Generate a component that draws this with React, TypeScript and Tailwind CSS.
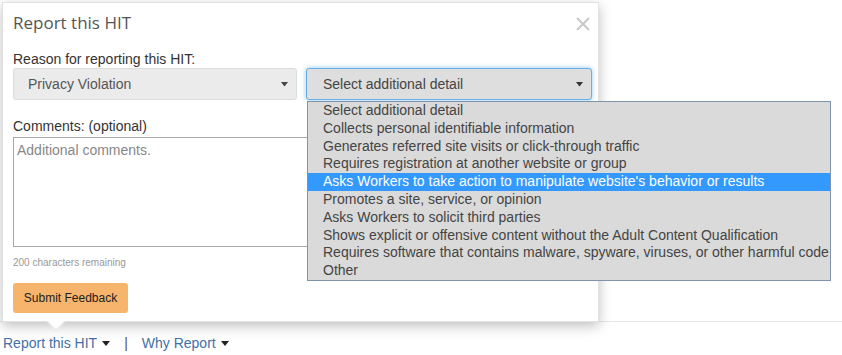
import React from "react";

const details = [
  "Select additional detail",
  "Collects personal identifiable information",
  "Generates referred site visits or click-through traffic",
  "Requires registration at another website or group",
  "Asks Workers to take action to manipulate website's behavior or results",
  "Promotes a site, service, or opinion",
  "Asks Workers to solicit third parties",
  "Shows explicit or offensive content without the Adult Content Qualification",
  "Requires software that contains malware, spyware, viruses, or other harmful code",
  "Other",
];

const Caret = ({ w = 8 }: { w?: number }) => (
  <svg width={w} height={w * 0.75} viewBox="0 0 8 6" className="inline-block">
    <path d="M0 0 L8 0 L4 5 Z" fill="currentColor" />
  </svg>
);

const App: React.FC = () => {
  return (
    <div
      className="relative w-[842px] h-[355px] bg-white overflow-hidden flex flex-col"
      style={{ fontFamily: '"Liberation Sans", Arial, sans-serif' }}
    >
      <div className="h-[322px] border-b border-[#e6e6e6] shrink-0" />

      {/* links under the popover */}
      <div className="flex items-center pl-[3px] pt-[10px] h-[33px] text-[14px] text-[#4470a6]">
        <span>Report this HIT</span>
        <span className="ml-[5px] mr-[14px] text-[#222]">
          <Caret />
        </span>
        <span className="text-[#555]">|</span>
        <span className="ml-[14px]">Why Report</span>
        <span className="ml-[5px] text-[#222]">
          <Caret />
        </span>
      </div>

      {/* report popover */}
      <div className="absolute left-[2px] top-[2px] w-[597px] h-[320px] bg-white border border-[#e2e2e2] shadow-[0_4px_12px_rgba(0,0,0,0.25)] pl-[10px] pr-[6px]">
        <div className="flex items-center justify-between h-[39px] pt-[1px]">
          <span
            className="text-[17px] text-[#555]"
            style={{ fontFamily: '"Open Sans", sans-serif' }}
          >
            Report this HIT
          </span>
          <svg width="14" height="14" viewBox="0 0 14 14" className="mr-[2px] mt-[1px]">
            <path d="M1 1 L13 13 M13 1 L1 13" stroke="#c8c8c8" strokeWidth="2" />
          </svg>
        </div>
        <div className="text-[14px] text-[#333] leading-[16px] h-[27px] pt-[9px]">
          Reason for reporting this HIT:
        </div>
        <div className="flex gap-[9px] mt-[-1px]">
          <div className="w-[284px] shrink-0 h-[32px] bg-[#ebebeb] border border-[#dcdcdc] rounded-[3px] flex items-center justify-between pl-[14px] pr-[8px] text-[14px] text-[#555]">
            <span>Privacy Violation</span>
            <span className="text-[#444]">
              <Caret w={7} />
            </span>
          </div>
          <div className="w-[286px] shrink-0 h-[32px] bg-[#dedede] border border-[#66afe9] shadow-[0_0_5px_rgba(102,175,233,0.7)] rounded-[3px] flex items-center justify-between pl-[16px] pr-[8px] text-[14px] text-[#444]">
            <span>Select additional detail</span>
            <span className="text-[#333]">
              <Caret w={7} />
            </span>
          </div>
        </div>
        <div className="text-[14px] text-[#333] leading-[16px] pt-[18px]">
          Comments: (optional)
        </div>
        <div className="mt-[3px] w-[300px] h-[110px] border border-[#a9a9a9] px-[3px] pt-[2px] text-[14px] text-[#888]">
          Additional comments.
        </div>
        <div className="text-[10px] text-[#999] mt-[10px] leading-[12px]">
          200 characters remaining
        </div>
        <button className="mt-[14px] w-[115px] h-[30px] bg-[#f6b46c] rounded-[3px] text-[12px] text-[#222]">
          Submit Feedback
        </button>
      </div>

      {/* pointer */}
      <div className="absolute left-[46px] top-[321px] w-0 h-0 border-l-[10px] border-r-[10px] border-t-[10px] border-l-transparent border-r-transparent border-t-[#ececec]" />
      <div className="absolute left-[47px] top-[320px] w-0 h-0 border-l-[9px] border-r-[9px] border-t-[9px] border-l-transparent border-r-transparent border-t-white" />

      {/* open dropdown list */}
      <div className="absolute left-[307px] top-[101px] w-[524px] bg-[#dadada] border border-[#7f93ad] text-[14px] text-[#444]">
        {details.map((d, i) => (
          <div
            key={d}
            className={
              i === 4
                ? "h-[17.8px] leading-[17.8px] pl-[15px] bg-[#3399ff] text-white whitespace-nowrap"
                : "h-[17.8px] leading-[17.8px] pl-[15px] whitespace-nowrap"
            }
          >
            {d}
          </div>
        ))}
      </div>
    </div>
  );
};

export default App;
